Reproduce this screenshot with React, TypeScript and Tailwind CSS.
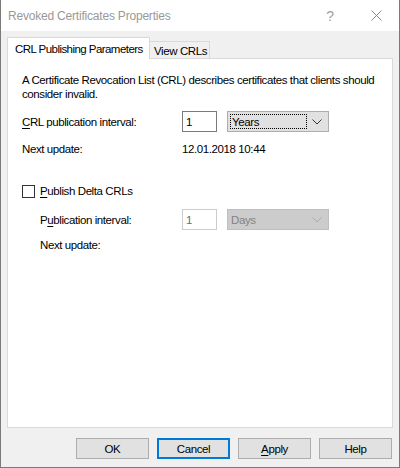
import React from "react";

const font = { fontFamily: '"Liberation Sans", Arial, sans-serif' };

function Chevron({ color }: { color: string }) {
  return (
    <svg width="10" height="6" viewBox="0 0 10 6" className="shrink-0">
      <path d="M0.5 0.5 L5 5 L9.5 0.5" fill="none" stroke={color} strokeWidth="1" />
    </svg>
  );
}

function Button({ label, primary, accel }: { label: string; primary?: boolean; accel?: boolean }) {
  return (
    <div
      className={`w-[73px] h-[21px] flex items-center justify-center bg-[#e1e1e1] text-black ${
        primary ? "border-2 border-[#0078d7]" : "border border-[#adadad]"
      }`}
    >
      {accel ? (
        <span>
          <span className="underline underline-offset-2">{label[0]}</span>
          {label.slice(1)}
        </span>
      ) : (
        label
      )}
    </div>
  );
}

export default function App() {
  return (
    <div
      className="w-[400px] h-[468px] flex flex-col bg-[#f0f0f0] border-x border-b border-[#7a7a7a] text-[11.5px] leading-[14px] tracking-[-0.4px] text-black"
      style={font}
    >
      {/* title bar */}
      <div className="h-[31px] shrink-0 bg-white flex items-center">
        <span className="pl-[7px] flex-1 text-[#999999] text-[12px] tracking-[-0.2px]">Revoked Certificates Properties</span>
        <div className="w-[46px] h-full flex items-center justify-center text-[#a0a0a0] text-[14px]">?</div>
        <div className="w-[46px] h-full flex items-center justify-center">
          <svg width="11" height="11" viewBox="0 0 11 11">
            <path d="M0.5 0.5 L10.5 10.5 M10.5 0.5 L0.5 10.5" stroke="#8a8a8a" strokeWidth="1" />
          </svg>
        </div>
      </div>

      <div className="flex flex-col px-[6px] pt-[6px]">
        {/* tabs */}
        <div className="flex items-end h-[21px] relative z-10">
          <div className="h-[22px] -mb-px pl-[7px] w-[143px] pt-[4px] bg-white border-x border-t border-[#d9d9d9] whitespace-nowrap tracking-[-0.55px]">
            CRL Publishing Parameters
          </div>
          <div className="h-[17px] pl-[4px] w-[60px] pt-[2px] bg-[#f0f0f0] border-r border-t border-[#d9d9d9] whitespace-nowrap">
            View CRLs
          </div>
        </div>

        {/* panel */}
        <div className="h-[370px] bg-white border border-[#d9d9d9] pl-[14px] pt-[14px]">
          <p className="whitespace-nowrap">
            A Certificate Revocation List (CRL) describes certificates that clients should
            <br />
            consider invalid.
          </p>

          <div className="flex items-center mt-[10px] h-[21px]">
            <span className="w-[160px]">
              <span className="underline underline-offset-2">C</span>RL publication interval:
            </span>
            <div className="w-[35px] h-[21px] border border-[#7a7a7a] flex items-center pl-[3px]">1</div>
            <div className="ml-[10px] w-[102px] h-[21px] border border-[#adadad] bg-[#e1e1e1] flex items-center pl-[2px] pr-[6px]">
              <div className="w-[77px] h-[15px] border border-dotted border-black flex items-center pl-px">Years</div>
              <div className="flex-1 flex justify-end">
                <Chevron color="#333333" />
              </div>
            </div>
          </div>

          <div className="flex items-center mt-[10px]">
            <span className="w-[160px]">Next update:</span>
            <span>12.01.2018 10:44</span>
          </div>

          <div className="flex items-center mt-[28px]">
            <div className="w-[13px] h-[13px] border border-[#333333] bg-white" />
            <span className="ml-[5px]">
              <span className="underline underline-offset-2">P</span>ublish Delta CRLs
            </span>
          </div>

          <div className="flex items-center mt-[11px] pl-[18px] h-[21px]">
            <span className="w-[142px]">
              P<span className="underline underline-offset-2">u</span>blication interval:
            </span>
            <div className="w-[35px] h-[21px] border border-[#cccccc] flex items-center pl-[3px] text-[#6d6d6d]">1</div>
            <div className="ml-[10px] w-[102px] h-[21px] border border-[#bfbfbf] bg-[#cccccc] flex items-center pl-[3px] pr-[6px] text-[#838383]">
              <span className="flex-1">Days</span>
              <Chevron color="#a8a8a8" />
            </div>
          </div>

          <div className="flex items-center mt-[8px] pl-[18px]">
            <span>Next update:</span>
          </div>
        </div>

        {/* buttons */}
        <div className="flex justify-end gap-[8px] mt-[10px] pr-px">
          <Button label="OK" />
          <Button label="Cancel" primary />
          <Button label="Apply" accel />
          <Button label="Help" />
        </div>
      </div>
    </div>
  );
}
